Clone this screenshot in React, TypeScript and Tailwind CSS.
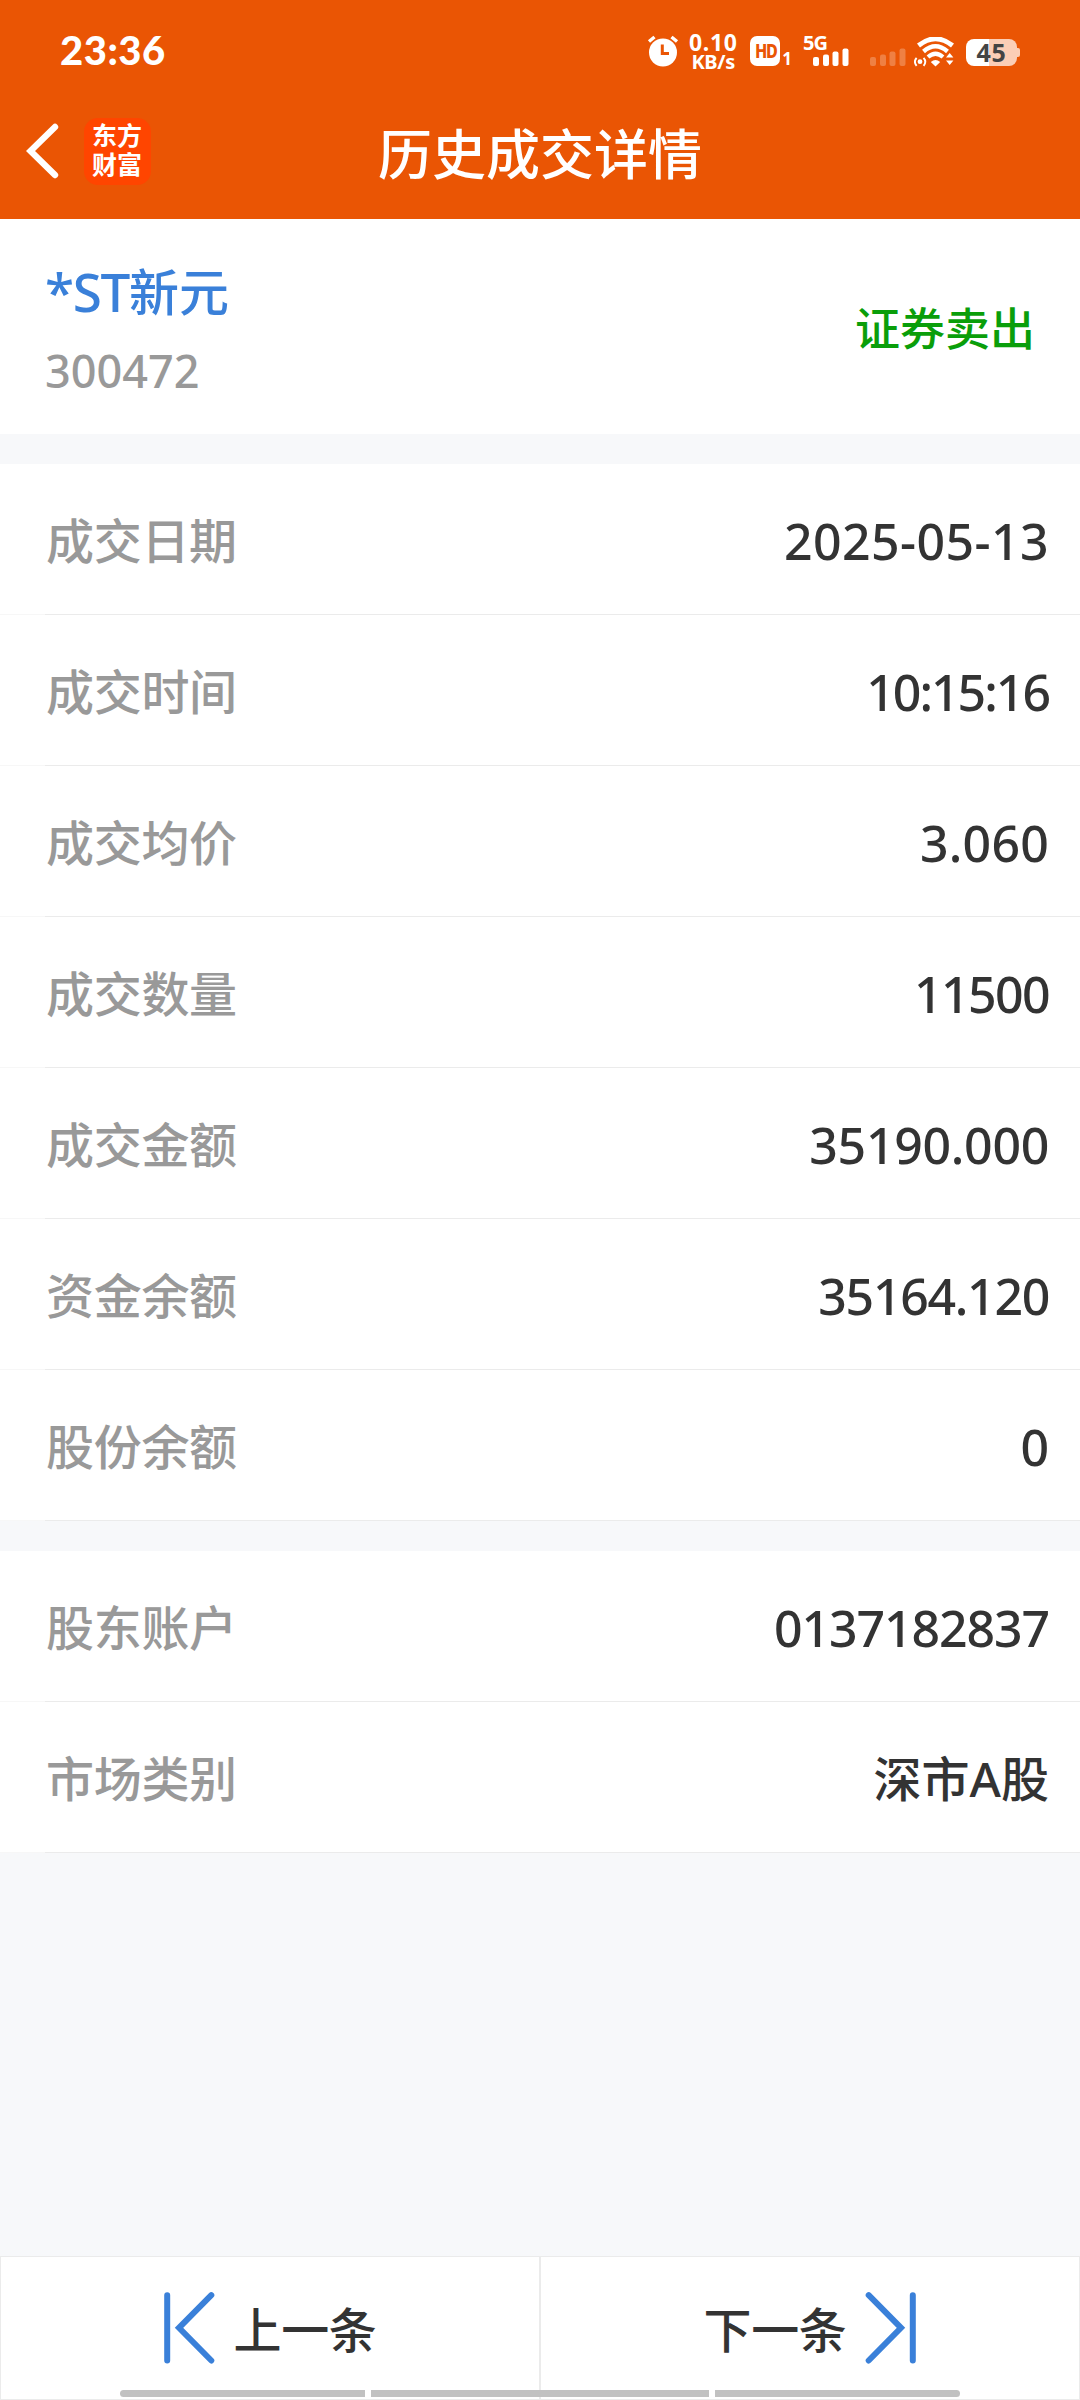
import { ReactNode } from 'react';

interface DetailRow {
  label: string;
  value: string;
  valueClass: string;
}

const tradeRows: DetailRow[] = [
  { label: '成交日期', value: '2025-05-13', valueClass: 'text-[50px] tracking-[0.4px]' },
  { label: '成交时间', value: '10:15:16', valueClass: 'text-[50px] tracking-[-2px]' },
  { label: '成交均价', value: '3.060', valueClass: 'text-[50px] tracking-[0.2px]' },
  { label: '成交数量', value: '11500', valueClass: 'text-[50px] tracking-[-1.6px]' },
  { label: '成交金额', value: '35190.000', valueClass: 'text-[50px] tracking-[-0.3px]' },
  { label: '资金余额', value: '35164.120', valueClass: 'text-[50px] tracking-[-1.3px]' },
  { label: '股份余额', value: '0', valueClass: 'text-[50px]' },
];

const accountRows: DetailRow[] = [
  { label: '股东账户', value: '0137182837', valueClass: 'text-[50px] tracking-[-1.1px]' },
  { label: '市场类别', value: '深市A股', valueClass: 'text-[48px]' },
];

function AlarmIcon() {
  return (
    <svg width="32" height="32" viewBox="0 0 32 32" fill="none">
      <circle cx="16" cy="17.5" r="14" fill="#fff" />
      <path d="M2 6.5L7.5 2M30 6.5L24.5 2" stroke="#fff" strokeWidth="3.4" />
      <path d="M15.3 9.5V18.5H22" stroke="#ea5504" strokeWidth="3" />
    </svg>
  );
}

function SignalBars({ className }: { className?: string }) {
  return (
    <svg width="36" height="18" viewBox="0 0 36 18" fill="#fff" className={className}>
      <rect x="0" y="9" width="6" height="9" rx="2" />
      <rect x="10" y="6.5" width="6" height="11.5" rx="2" />
      <rect x="19.5" y="3.5" width="6" height="14.5" rx="2" />
      <rect x="29.5" y="0.5" width="6" height="17.5" rx="2" />
    </svg>
  );
}

function WifiIcon() {
  return (
    <svg width="40" height="30" viewBox="0 0 40 30" fill="none" stroke="#fff">
      <path d="M4.5 8.5Q21.5 -5 38.5 8.5" strokeWidth="4.8" />
      <path d="M9.5 14.5Q21.5 4 33.5 14.5" strokeWidth="4.4" />
      <path d="M14 20Q21.5 13.5 29 20" strokeWidth="4.2" />
      <path d="M16.8 25Q21.5 21 26.2 25L21.5 29.5Z" fill="#fff" stroke="none" />
      <circle cx="6" cy="24.7" r="2.4" fill="#fff" stroke="none" />
      <path d="M2.6 20.8Q-0.8 24.8 2.6 28.8M9.6 20.8Q13 24.8 9.6 28.8" strokeWidth="1.9" />
      <path d="M32 20.5H39.4L35.7 16ZM32 23.5H39.4L35.7 28Z" fill="#fff" stroke="none" />
    </svg>
  );
}

function Battery() {
  return (
    <div className="flex items-center">
      <div className="flex h-[27px] w-[51px] items-center justify-center rounded-[8px] bg-[linear-gradient(to_right,#fff_23px,#fbceb6_23px)]">
        <span className="text-[25px] leading-none font-bold tracking-[0.8px] text-[#444]">45</span>
      </div>
      <div className="h-[9px] w-[3px] rounded-r-[2px] bg-[#fbceb6]" />
    </div>
  );
}

function StatusBar() {
  return (
    <div className="flex h-[100px] items-start justify-between px-[60px] text-white">
      <span className="mt-[30px] font-['Lato'] text-[40px] leading-[40px] font-black tracking-[0.5px]">23:36</span>
      <div className="flex items-start">
        <div className="mt-[35px]">
          <AlarmIcon />
        </div>
        <div className="mt-[32px] ml-[9px] flex w-[50px] flex-col items-center font-bold">
          <span className="text-[23px] leading-[20px] tracking-[0.6px]">0.10</span>
          <span className="text-[20px] leading-[19px] tracking-[-0.3px]">KB/s</span>
        </div>
        <div className="mt-[36px] ml-[12px] flex h-[30px] w-[30px] items-center justify-center rounded-[7px] bg-white text-[19px] leading-none font-extrabold tracking-[-1.5px] text-[#ea5504]">
          <span className="scale-x-85">HD</span>
        </div>
        <span className="mt-[50px] ml-[2px] text-[17px] leading-[18px] font-bold">1</span>
        <div className="mt-[34px] ml-[11px] flex w-[46px] flex-col">
          <span className="text-[20px] leading-[18px] font-bold tracking-[-1px]">5G</span>
          <SignalBars className="-mt-[4px] ml-[10px]" />
        </div>
        <SignalBars className="mt-[48px] ml-[21px] opacity-25" />
        <div className="mt-[37px] ml-[8px]">
          <WifiIcon />
        </div>
        <div className="mt-[39px] ml-[12px]">
          <Battery />
        </div>
      </div>
    </div>
  );
}

function NavBar() {
  return (
    <div className="grid h-[106px] grid-cols-[1fr_auto_1fr] items-center text-white">
      <div className="flex items-center gap-[24px] pb-[4px] pl-[26px]">
        <svg width="34" height="56" viewBox="0 0 34 56" fill="none" stroke="#fff" strokeWidth="6.4" strokeLinecap="round">
          <path d="M29 4L4.5 28L29 52" />
        </svg>
        <div className="flex h-[67px] w-[67px] flex-col items-center justify-center rounded-[14px] bg-[#ff4500] pr-[1px] font-['Liberation_Sans','Noto_Sans_CJK_SC',sans-serif] text-[25px] leading-[29px] font-bold">
          <span>东方</span>
          <span>财富</span>
        </div>
      </div>
      <h1 className="pt-[2px] text-[54px] leading-none font-medium">历史成交详情</h1>
    </div>
  );
}

function RowGroup({ rows }: { rows: DetailRow[] }) {
  return (
    <div className="bg-white">
      {rows.map((row) => (
        <div key={row.label}>
          <div className="flex h-[150px] items-center justify-between pt-[3px] pr-[31px] pl-[46px]">
            <span className="text-[48px] leading-none tracking-[-0.3px] text-[#999]">{row.label}</span>
            <span className={`leading-none text-[#333] ${row.valueClass}`}>{row.value}</span>
          </div>
          <div className="h-px bg-[linear-gradient(to_right,#f7f7f7_45px,#ebebeb_45px)]" />
        </div>
      ))}
    </div>
  );
}

function StepIcon({ className }: { className?: string }) {
  return (
    <svg
      width="51"
      height="72"
      viewBox="0 0 51 72"
      fill="none"
      stroke="#3a80d9"
      strokeWidth="6"
      strokeLinecap="round"
      className={className}
    >
      <path d="M3.2 3.2V68.5M47.3 3.2L15 35.8L47.3 68.5" />
    </svg>
  );
}

function StepButton({ children }: { children: ReactNode }) {
  return (
    <button className="flex h-[144px] flex-1 items-center justify-center gap-[19px] border border-[#ebebeb] bg-white text-[48px] leading-none font-medium tracking-[-0.4px] text-[#333]">
      {children}
    </button>
  );
}

export default function App() {
  return (
    <div className="flex h-[2400px] w-[1080px] flex-col overflow-hidden bg-[#f7f8fa] font-['Noto_Sans','Noto_Sans_CJK_SC',sans-serif] font-medium">
      <header className="h-[219px] bg-[#ea5504]">
        <StatusBar />
        <NavBar />
      </header>

      {/* Security summary */}
      <section className="flex h-[215px] items-center justify-between bg-white pt-[4px] pr-[45px] pl-[45px]">
        <div className="flex flex-col pt-[6px]">
          <span className="flex items-center text-[50px] leading-[78px] text-[#3a80d9]">
            <span className="text-[53px] tracking-[-1.3px]">*ST</span>
            新元
          </span>
          <span className="text-[45px] leading-[80px] text-[#999]">300472</span>
        </div>
        <span className="text-[45px] leading-none text-[#0a9e0a]">证券卖出</span>
      </section>

      <div className="mt-[30px]">
        <RowGroup rows={tradeRows} />
      </div>
      <div className="mt-[30px]">
        <RowGroup rows={accountRows} />
      </div>

      <footer className="relative mt-auto flex">
        <StepButton>
          <StepIcon />
          <span className="pt-[3px]">上一条</span>
        </StepButton>
        <StepButton>
          <span className="pt-[3px]">下一条</span>
          <StepIcon className="-scale-x-100" />
        </StepButton>
        {/* System gesture hint */}
        <div className="absolute bottom-[3px] left-[120px] flex w-[840px] gap-[6px]">
          <div className="h-[7px] w-[245px] rounded-l-full bg-[#c1c1c1]" />
          <div className="h-[7px] flex-1 bg-[#c1c1c1]" />
          <div className="h-[7px] w-[245px] rounded-r-full bg-[#c1c1c1]" />
        </div>
      </footer>
    </div>
  );
}
